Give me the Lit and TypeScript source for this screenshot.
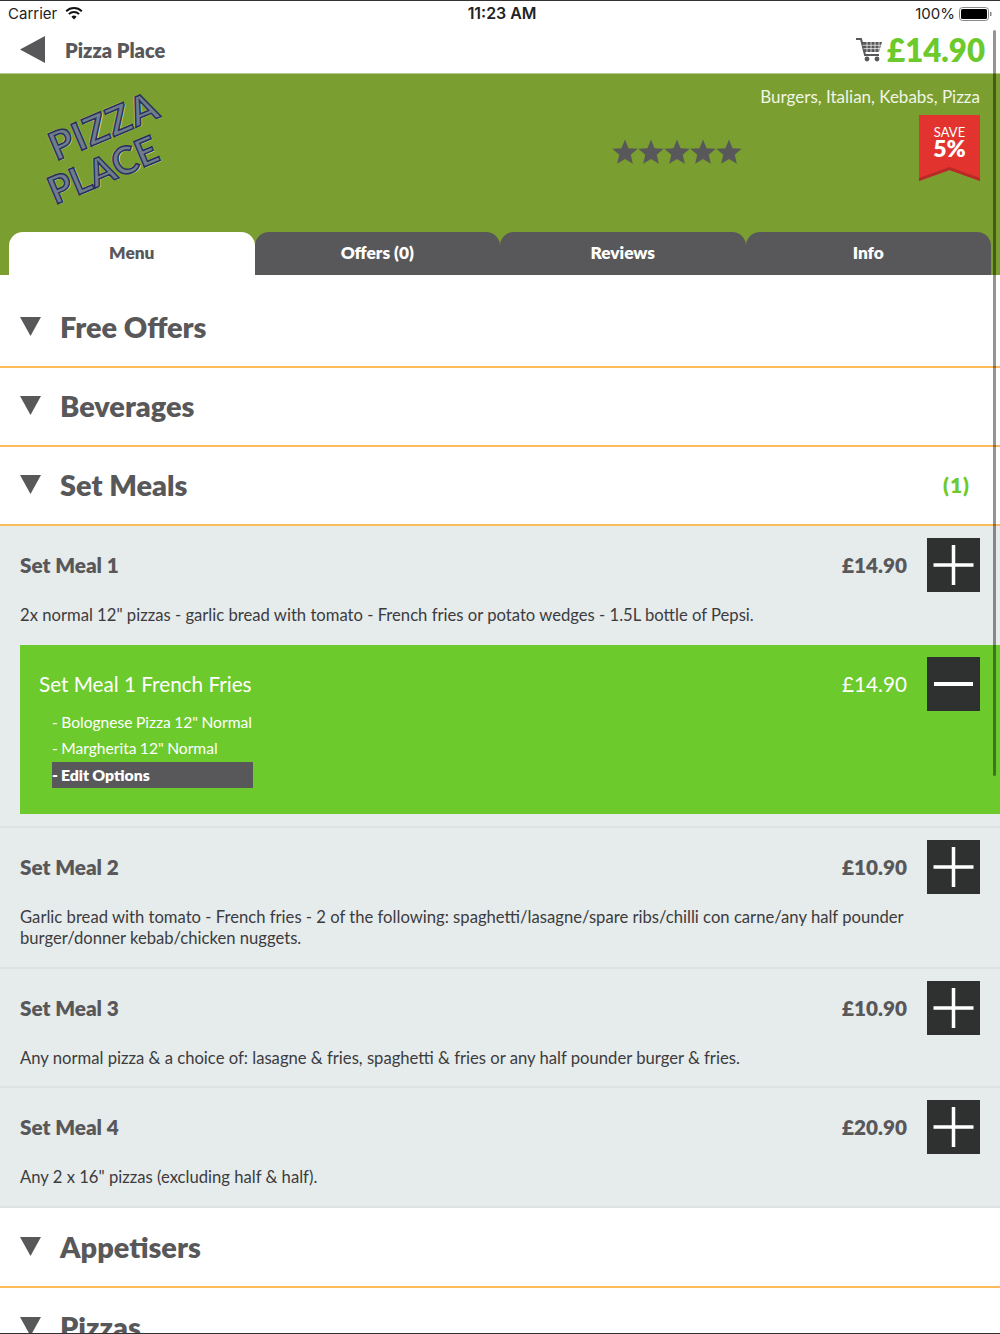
import { LitElement, html, css, svg } from "lit";
import { customElement } from "lit/decorators.js";

const starPoints = Array.from({ length: 10 }, (_, i) => {
  const r = i % 2 ? 6 : 13.4;
  const a = (Math.PI / 5) * i - Math.PI / 2;
  return `${(13 + r * Math.cos(a)).toFixed(2)},${(14 + r * Math.sin(a)).toFixed(2)}`;
}).join(" ");
const star = svg`<polygon points="${starPoints}" fill="#58585a"/>`;

@customElement("app-root")
export class AppRoot extends LitElement {
  static styles = css`
    :host { display: block; width: 1000px; height: 1334px; overflow: hidden; position: relative; background: #fff; font-family: Lato, "Liberation Sans", sans-serif; color: #58585a; }
    .status { border-top: 1px solid #333; height: 25px; display: grid; grid-template-columns: 1fr auto 1fr; align-items: center; font-family: Inter, "Open Sans", sans-serif; font-size: 15px; color: #222; padding: 0 7px 0 8px; }
    .status .l, .status .r { display: flex; align-items: center; gap: 8px; }
    .status .r { justify-content: flex-end; gap: 4px; }
    .status .t { font-weight: 600; font-size: 15.9px; margin-left: 3px; }
    .head { height: 47px; display: flex; align-items: center; padding: 0 15px 0 20px; }
    .head .title { font-weight: 800; font-size: 20px; margin-left: 20px; flex: 1; }
    .head .total { font-weight: 800; font-size: 31.2px; color: #6cca2c; margin-left: 5px; }
    .hero { height: 202px; background: #7a9e30; position: relative; border-top: 1px solid #b5cb8b; box-sizing: border-box; }
    .logo { position: absolute; left: 49px; top: 28px; width: 130px; transform: rotate(-23deg); font-family: Lato, sans-serif; font-weight: 700; line-height: 40px; color: #6f7d8c; -webkit-text-stroke: 1.5px #26305e; text-shadow: 1px 1px 0 #e4e8d4, -1px -1px 0 #c7c94a; }
    .logo div { white-space: nowrap; }
    .logo .p1 { font-size: 39px; margin-left: 4px; letter-spacing: 1px; }
    .logo .p2 { font-size: 38px; margin-left: -14px; letter-spacing: 0; }
    .cuisines { position: absolute; right: 20px; top: 12px; font-size: 17px; color: #f1f5e6; }
    .stars { position: absolute; left: 612px; top: 65px; display: flex; }
    .stars svg { width: 26px; height: 26px; display: block; }
    .ribbon { position: absolute; left: 919px; top: 41px; width: 61px; height: 66px; }
    .ribbon svg { position: absolute; inset: 0; }
    .ribbon span { position: absolute; left: 0; right: 0; text-align: center; color: #fff; }
    .ribbon .a { top: 11px; font-size: 13px; line-height: 12px; }
    .ribbon .b { top: 23px; font-size: 23px; line-height: 20px; font-weight: 800; }
    .tabs { position: absolute; left: 9px; right: 9px; bottom: 0; height: 43px; display: grid; grid-template-columns: repeat(4, 1fr); }
    .tab { background: #58585a; color: #fff; border-radius: 14px 14px 0 0; font-weight: 800; font-size: 17.3px; display: flex; align-items: center; justify-content: center; padding-bottom: 2px; box-sizing: border-box; }
    .tab.on { background: #fff; color: #58585a; }
    .cat { height: 79px; border-bottom: 2px solid #fdbb5c; display: flex; align-items: center; padding: 0 30px 2px 20px; font-weight: 800; font-size: 28.9px; box-sizing: border-box; }
    .cat.first { margin-top: 14px; }
    .cat.tall { height: 80px; }
    .cat.last { border: 0; }
    .cat .tri { width: 21px; height: 19px; margin-right: 19px; flex: none; }
    .cat .name { flex: 1; }
    .cat .n { color: #6cca2c; font-size: 21px; letter-spacing: 1px; }
    .item { background: #e6ebec; border-bottom: 2px solid #dde2e3; padding: 12px 0 18px 20px; box-sizing: border-box; }
    .item.open { padding-bottom: 0; }
    .item.short { padding-bottom: 17px; }
    .row { display: flex; align-items: center; height: 54px; padding-right: 20px; }
    .row .nm { flex: 1; font-weight: 800; font-size: 20.7px; }
    .row .pr { font-weight: 800; font-size: 20.7px; margin-right: 20px; }
    .btn { width: 53px; height: 54px; background: #2f3030; display: block; flex: none; }
    .desc { font-size: 16.65px; line-height: 21px; margin-top: 13px; color: #3c3c3e; padding-right: 90px; }
    .sel { background: #6cca2c; height: 169px; margin-top: 19px; margin-bottom: 12px; padding: 12px 0 0 19px; box-sizing: border-box; color: #fff; }
    .sel .nm, .sel .pr { font-weight: 400; }
    .subs { margin-left: 13px; margin-top: -2px; width: 201px; font-size: 15.6px; line-height: 26px; word-spacing: -0.6px; }
    .subs .edit { background: #58585a; font-weight: 800; font-size: 15.8px; margin-top: 1px; }
    .subs div { white-space: nowrap; }
    .scroll { position: absolute; left: 993px; top: 30px; width: 3px; height: 746px; background: rgba(0,0,0,0.42); border-radius: 2px; }
    .edge { position: absolute; left: 0; right: 0; bottom: 0; height: 1px; background: #333; }
  `;

  plus() { return html`<svg class="btn" viewBox="0 0 53 54"><rect x="6.5" y="25.25" width="40" height="3.5" fill="#fff"/><rect x="24.75" y="7" width="3.5" height="40" fill="#fff"/></svg>`; }
  minus() { return html`<svg class="btn" viewBox="0 0 53 54"><rect x="7" y="25" width="39" height="4" fill="#fff"/></svg>`; }
  tri() { return html`<svg class="tri" viewBox="0 0 21 19"><path d="M0 0H21L10.5 19Z" fill="#58585a"/></svg>`; }

  cat(name: string, cls = "", n = "") {
    return html`<div class="cat ${cls}">${this.tri()}<span class="name">${name}</span>${n ? html`<span class="n">${n}</span>` : ""}</div>`;
  }
  item(name: string, price: string, desc: string, cls = "") {
    return html`<div class="item ${cls}"><div class="row"><span class="nm">${name}</span><span class="pr">${price}</span>${this.plus()}</div><div class="desc">${desc}</div></div>`;
  }

  render() {
    return html`
      <div class="status">
        <div class="l"><span>Carrier</span>
          <svg width="18" height="13" viewBox="0 0 18 13"><path d="M9 12.6 6.4 9.7a3.8 3.8 0 0 1 5.2 0Z" fill="#111"/><path d="M3.9 7.1a7.4 7.4 0 0 1 10.2 0M1.2 4.2a11.4 11.4 0 0 1 15.6 0" fill="none" stroke="#111" stroke-width="2"/></svg></div>
        <div class="t">11:23 AM</div>
        <div class="r"><span>100%</span>
          <svg width="34" height="14" viewBox="0 0 34 14"><rect x="0.5" y="0.5" width="29" height="13" rx="3" fill="none" stroke="#888"/><rect x="2" y="2" width="26" height="10" rx="1.5" fill="#000"/><rect x="31" y="5" width="1.5" height="4" fill="#888"/></svg></div>
      </div>
      <div class="head">
        <svg width="25" height="27" viewBox="0 0 25 27"><path d="M25 0V27L0 13.5Z" fill="#58585a"/></svg>
        <span class="title">Pizza Place</span>
        <svg width="26" height="24" viewBox="0 0 26 24"><path d="M0 1H5L9 17H23" fill="none" stroke="#58585a" stroke-width="2"/><path d="M6 4H26L23 14H8.5Z" fill="#58585a"/><path d="M11 4V14M15 4V14M19 4V14M23 4V14M6.5 7.3H25M7.5 10.6H24" stroke="#fff" stroke-width=".7"/><circle cx="11" cy="21" r="2.4" fill="#58585a"/><circle cx="21" cy="21" r="2.4" fill="#58585a"/></svg>
        <span class="total">£14.90</span>
      </div>
      <div class="hero">
        <div class="logo"><div class="p1">PIZZA</div><div class="p2">PLACE</div></div>
        <div class="cuisines">Burgers, Italian, Kebabs, Pizza</div>
        <div class="stars">${[1,2,3,4,5].map(() => html`<svg viewBox="0 0 26 26">${star}</svg>`)}</div>
        <div class="ribbon">
          <svg width="61" height="66" viewBox="0 0 61 66"><path d="M0 0H61V66L30.5 55 0 66Z" fill="#e2332f"/><path d="M0 63 30.5 52 61 63V66L30.5 55 0 66Z" fill="#b82a28"/></svg>
          <span class="a">SAVE</span><span class="b">5%</span>
        </div>
        <div class="tabs">
          <div class="tab on">Menu</div><div class="tab">Offers (0)</div><div class="tab">Reviews</div><div class="tab">Info</div>
        </div>
      </div>
      ${this.cat("Free Offers", "first")}
      ${this.cat("Beverages")}
      ${this.cat("Set Meals", "", "(1)")}
      <div class="item open">
        <div class="row"><span class="nm">Set Meal 1</span><span class="pr">£14.90</span>${this.plus()}</div>
        <div class="desc">2x normal 12" pizzas - garlic bread with tomato - French fries or potato wedges - 1.5L bottle of Pepsi.</div>
        <div class="sel">
          <div class="row"><span class="nm">Set Meal 1 French Fries</span><span class="pr">£14.90</span>${this.minus()}</div>
          <div class="subs"><div>- Bolognese Pizza 12" Normal</div><div>- Margherita 12" Normal</div><div class="edit">- Edit Options</div></div>
        </div>
      </div>
      ${this.item("Set Meal 2", "£10.90", "Garlic bread with tomato - French fries - 2 of the following: spaghetti/lasagne/spare ribs/chilli con carne/any half pounder burger/donner kebab/chicken nuggets.")}
      ${this.item("Set Meal 3", "£10.90", "Any normal pizza & a choice of: lasagne & fries, spaghetti & fries or any half pounder burger & fries.", "short")}
      ${this.item("Set Meal 4", "£20.90", 'Any 2 x 16" pizzas (excluding half & half).')}
      ${this.cat("Appetisers", "tall")}
      ${this.cat("Pizzas", "last")}
      <div class="scroll"></div>
      <div class="edge"></div>
    `;
  }
}
